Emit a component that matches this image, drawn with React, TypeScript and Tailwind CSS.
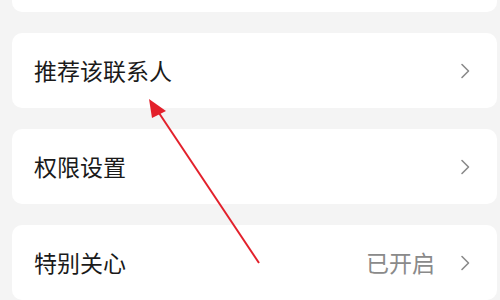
import React from 'react'

const font = { fontFamily: '"Noto Sans CJK SC", "Noto Sans", sans-serif' }

function Chevron() {
  return (
    <svg width="12" height="16" viewBox="0 0 12 16" className="shrink-0">
      <path d="M3 1.5 L9.5 8 L3 14.5" fill="none" stroke="#8a8a8a" strokeWidth="1.6" strokeLinecap="round" strokeLinejoin="round" />
    </svg>
  )
}

function Row({ label, value }: { label: string; value?: string }) {
  return (
    <div className="flex h-[75px] items-center rounded-[10px] bg-white pl-[22px] pr-[26px]">
      <span className="flex-1 text-[23px] text-[#1a1a1a]">{label}</span>
      {value && <span className="mr-[24px] text-[23px] text-[#8a8a8a]">{value}</span>}
      <Chevron />
    </div>
  )
}

export default function App() {
  return (
    <div className="relative h-[300px] w-[500px] overflow-hidden bg-[#f4f4f4]" style={font}>
      <div className="flex flex-col gap-[21px] pl-[12px] pr-[3px]">
        <div className="-mt-[63px] h-[75px] rounded-[10px] bg-white" />
        <Row label="推荐该联系人" />
        <Row label="权限设置" />
        <Row label="特别关心" value="已开启" />
      </div>

      {/* annotation arrow */}
      <svg className="pointer-events-none absolute inset-0" width="500" height="300" viewBox="0 0 500 300">
        <line x1="259" y1="263" x2="159" y2="113" stroke="#e3202b" strokeWidth="2" />
        <polygon points="149,99 152,118 166,111" fill="#e3202b" />
      </svg>
    </div>
  )
}
